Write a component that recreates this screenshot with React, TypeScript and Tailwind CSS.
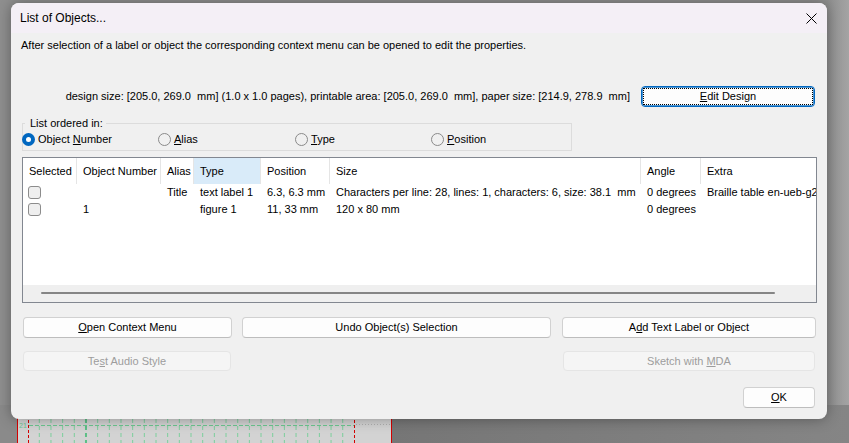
import React from "react";

function Btn({
  children,
  className = "",
  disabled = false,
}: {
  children: React.ReactNode;
  className?: string;
  disabled?: boolean;
}) {
  return (
    <div
      className={
        "flex items-center justify-center rounded-[4px] border text-[11px] " +
        (disabled
          ? "border-[#e5e5e5] bg-[#f5f5f5] text-[#9d9d9d] "
          : "border-[#d1d1d1] border-b-[#bdbdbd] bg-[#fdfdfd] text-black ") +
        className
      }
    >
      {children}
    </div>
  );
}

function Radio({ checked, children }: { checked?: boolean; children: React.ReactNode }) {
  return (
    <div className="flex items-center gap-[3px]">
      {checked ? (
        <div className="flex h-[13px] w-[13px] items-center justify-center rounded-full bg-[#0067c0]">
          <div className="h-[5px] w-[5px] rounded-full bg-white" />
        </div>
      ) : (
        <div className="h-[13px] w-[13px] rounded-full border border-[#8a8a8a] bg-[#f0f0f0]" />
      )}
      <span>{children}</span>
    </div>
  );
}

function Check() {
  return <div className="ml-[5px] h-[13px] w-[13px] rounded-[3px] border border-[#8c8c8c] bg-[#efefef]" />;
}

const cols = [
  { name: "Selected", w: "w-[54px]" },
  { name: "Object Number", w: "w-[84px]" },
  { name: "Alias", w: "w-[33px]" },
  { name: "Type", w: "w-[67px]" },
  { name: "Position", w: "w-[69px]" },
  { name: "Size", w: "w-[311px]" },
  { name: "Angle", w: "w-[60px]" },
  { name: "Extra", w: "w-[120px]" },
];

function Background() {
  const minors: number[] = [];
  for (let i = 0; i < 28; i++) {
    const x = 39.3 + i * 11.67;
    if (x < 354) minors.push(x);
  }
  return (
    <svg className="absolute inset-0" width={849} height={443}>
      <defs>
        <linearGradient id="rs" x1="0" x2="1" y1="0" y2="0">
          <stop offset="0" stopColor="#8e8e8e" />
          <stop offset="1" stopColor="#a4a4a4" />
        </linearGradient>
        <linearGradient id="br" x1="0" x2="1" y1="0" y2="0">
          <stop offset="0" stopColor="#767676" />
          <stop offset="1" stopColor="#858585" />
        </linearGradient>
      </defs>
      <rect width={849} height={443} fill="#8f8f8f" />
      <rect x={827} width={22} height={443} fill="url(#rs)" />
      <rect x={392} y={405} width={457} height={38} fill="url(#br)" />
      <rect x={0} y={405} width={17} height={38} fill="#8a8a8a" />
      <rect x={17} y={300} width={375} height={143} fill="#d3d3d3" />
      <line x1={17.5} y1={300} x2={17.5} y2={443} stroke="#d40000" strokeWidth={1} />
      <line x1={391.5} y1={300} x2={391.5} y2={443} stroke="#d40000" strokeWidth={1} />
      <line x1={28.5} y1={300} x2={28.5} y2={443} stroke="#d40000" strokeWidth={1} strokeDasharray="3 2" />
      <line x1={354.5} y1={300} x2={354.5} y2={443} stroke="#d40000" strokeWidth={1} strokeDasharray="3 2" />
      <line x1={29} y1={425.5} x2={354} y2={425.5} stroke="#6cc790" strokeWidth={1} strokeDasharray="4 2" />
      <line x1={356} y1={424.5} x2={390} y2={424.5} stroke="#b0b0b0" strokeWidth={1} strokeDasharray="1 2" />
      {minors.map((x, i) => {
        const major = Math.abs(((x - 86) / 11.67) % 5) < 0.05;
        return (
          <line
            key={i}
            x1={x}
            y1={419}
            x2={x}
            y2={443}
            stroke={major ? "#5dbf86" : "#7ccf9c"}
            strokeWidth={major ? 2 : 1}
            strokeDasharray="4 3"
          />
        );
      })}
      <text x={19} y={428} fontSize={7} fill="#6cc790" fontFamily="Liberation Sans">
        21
      </text>
    </svg>
  );
}

export default function App() {
  return (
    <div className="relative h-[443px] w-[849px] overflow-hidden font-['Liberation_Sans',Arial,sans-serif] text-[11px] text-black">
      <Background />
      <div className="absolute left-[11px] top-[3px] flex h-[416px] w-[816px] flex-col rounded-[8px] bg-[#f0f0f0] shadow-[0_0_14px_rgba(0,0,0,0.35)]">
        <div className="flex h-[30px] items-center justify-between rounded-t-[8px] bg-[#f4eff6] pl-[9px] pr-[10px]">
          <span className="text-[12px]">List of Objects...</span>
          <svg width="11" height="11" viewBox="0 0 11 11">
            <path d="M0.5 0.5 L10.5 10.5 M10.5 0.5 L0.5 10.5" stroke="#000" strokeWidth="1" />
          </svg>
        </div>
        <div className="flex flex-1 flex-col px-[11px]">
          <div className="-ml-px mt-[4px] h-[16px] leading-[16px]">
            After selection of a label or object the corresponding context menu can be opened to edit the properties.
          </div>
          <div className="mt-[33px] flex h-[21px] items-center justify-end gap-[11px] pr-[1px]">
            <span className="whitespace-pre">
              design size: [205.0, 269.0  mm] (1.0 x 1.0 pages), printable area: [205.0, 269.0  mm], paper size: [214.9, 278.9  mm]
            </span>
            <div className="flex h-[21px] w-[174px] items-center justify-center rounded-[4px] border border-[#0067c0] bg-[#fdfdfd] p-[1px] shadow-[inset_0_0_0_1px_#4d95d3]">
              <div className="flex h-full w-full items-center justify-center border border-dotted border-black">
                <span>
                  <u>E</u>dit Design
                </span>
              </div>
            </div>
          </div>
          <fieldset className="mt-[8px] w-[550px] border border-[#dcdcdc] pb-[3px]">
            <legend className="ml-[2px] h-[16px] pl-[5px] pr-[3px] leading-[16px]">List ordered in:</legend>
            <div className="-ml-px grid h-[16px] grid-cols-[136px_137px_136px_1fr] items-center">
              <Radio checked>
                Object <u>N</u>umber
              </Radio>
              <Radio>
                <u>A</u>lias
              </Radio>
              <Radio>
                <u>T</u>ype
              </Radio>
              <Radio>
                <u>P</u>osition
              </Radio>
            </div>
          </fieldset>
          <div className="mt-[6px] flex h-[146px] w-[795px] flex-col overflow-hidden border border-[#828790] bg-white">
            <div className="flex h-[26px] shrink-0 items-stretch whitespace-nowrap">
              {cols.map((c) => (
                <div
                  key={c.name}
                  className={
                    c.w +
                    " flex shrink-0 items-center border-r border-[#e5e5e5] pl-[6px] " +
                    (c.name === "Type" ? "bg-[#d9ebf9]" : "")
                  }
                >
                  {c.name}
                </div>
              ))}
            </div>
            <div className="flex h-[17px] shrink-0 items-center whitespace-nowrap">
              <div className="flex w-[54px] shrink-0 items-center">
                <Check />
              </div>
              <div className="w-[84px] shrink-0 pl-[6px]" />
              <div className="w-[33px] shrink-0 pl-[6px]">Title</div>
              <div className="w-[67px] shrink-0 pl-[6px]">text label 1</div>
              <div className="w-[69px] shrink-0 pl-[6px]">6.3, 6.3 mm</div>
              <div className="w-[311px] shrink-0 whitespace-pre pl-[6px]">
                Characters per line: 28, lines: 1, characters: 6, size: 38.1  mm
              </div>
              <div className="w-[60px] shrink-0 pl-[6px]">0 degrees</div>
              <div className="w-[120px] shrink-0 pl-[6px]">Braille table en-ueb-g2</div>
            </div>
            <div className="flex h-[17px] shrink-0 items-center whitespace-nowrap">
              <div className="flex w-[54px] shrink-0 items-center">
                <Check />
              </div>
              <div className="w-[84px] shrink-0 pl-[6px]">1</div>
              <div className="w-[33px] shrink-0 pl-[6px]" />
              <div className="w-[67px] shrink-0 pl-[6px]">figure 1</div>
              <div className="w-[69px] shrink-0 pl-[6px]">11, 33 mm</div>
              <div className="w-[311px] shrink-0 pl-[6px]">120 x 80 mm</div>
              <div className="w-[60px] shrink-0 pl-[6px]">0 degrees</div>
            </div>
            <div className="flex-1" />
            <div className="h-[17px] shrink-0 bg-[#efefef] pt-[7px]">
              <div className="ml-[18px] h-[2px] w-[734px] rounded-full bg-[#858585]" />
            </div>
          </div>
          <div className="mt-[14px] flex h-[21px]">
            <Btn className="ml-[1px] w-[209px]">
              <span>
                <u>O</u>pen Context Menu
              </span>
            </Btn>
            <Btn className="ml-[10px] w-[309px]">Undo Object(s) Selection</Btn>
            <Btn className="ml-[11px] w-[254px]">
              <span>
                A<u>d</u>d Text Label or Object
              </span>
            </Btn>
          </div>
          <div className="mt-[13px] flex h-[20px] justify-between pr-[1px]">
            <Btn disabled className="ml-[1px] w-[208px]">
              <span>
                Te<u>s</u>t Audio Style
              </span>
            </Btn>
            <Btn disabled className="w-[252px]">
              <span>
                Sketch with <u>M</u>DA
              </span>
            </Btn>
          </div>
          <div className="mt-[16px] flex justify-end pr-[1px]">
            <Btn className="h-[21px] w-[72px]">
              <span>
                <u>O</u>K
              </span>
            </Btn>
          </div>
        </div>
      </div>
    </div>
  );
}
